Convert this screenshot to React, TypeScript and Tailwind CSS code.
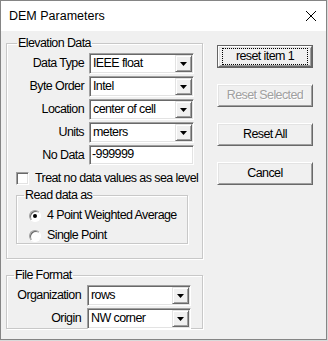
import React from "react";

const narrow = { fontFamily: '"Liberation Sans", Arial, sans-serif', letterSpacing: "-0.6px" };

function Arrow() {
  return (
    <svg width="7" height="4" viewBox="0 0 7 4">
      <path d="M0 0H7L3.5 4Z" fill="#000" />
    </svg>
  );
}

function Combo({ value }: { value: string }) {
  return (
    <div className="flex h-[21px] w-full border border-t-[#a0a0a0] border-l-[#a0a0a0] border-b-white border-r-white bg-white shadow-[inset_1px_1px_0_#696969,inset_-1px_-1px_0_#e3e3e3]">
      <div className="flex-1 whitespace-nowrap pl-[3px] pt-[1px] text-[12.5px] leading-[17px] text-black">{value}</div>
      <div className="my-[1px] mr-[1px] flex w-[17px] items-center justify-center border border-t-[#e3e3e3] border-l-[#e3e3e3] border-b-[#696969] border-r-[#696969] bg-[#f0f0f0] shadow-[inset_1px_1px_0_#fff,inset_-1px_-1px_0_#a0a0a0]">
        <Arrow />
      </div>
    </div>
  );
}

function Field({ label, children }: { label: string; children: React.ReactNode }) {
  return (
    <div className="flex items-center">
      <div className="w-[79px] whitespace-nowrap pr-[5px] text-right text-[12.5px] leading-[17px]">{label}</div>
      <div className="w-[105px]">{children}</div>
    </div>
  );
}

function Group({ title, className, children }: { title: string; className: string; children: React.ReactNode }) {
  return (
    <fieldset className={"border border-[#c8c8c8] shadow-[1px_1px_0_#fff,inset_1px_1px_0_#fff] " + className}>
      <legend className="ml-[7px] whitespace-nowrap px-[1px] text-[12.5px] leading-[14px]">{title}</legend>
      {children}
    </fieldset>
  );
}

function Button({ label, isDefault, disabled }: { label: string; isDefault?: boolean; disabled?: boolean }) {
  const inner = (
    <div className="flex h-full items-center justify-center border border-t-white border-l-white border-b-[#696969] border-r-[#696969] bg-[#f0f0f0] shadow-[inset_1px_1px_0_#e3e3e3,inset_-1px_-1px_0_#a0a0a0]">
      <span
        className={
          "whitespace-nowrap text-[12.5px] leading-[15px] " +
          (isDefault ? "w-[84px] text-center outline outline-1 outline-dotted outline-black " : "") +
          (disabled ? "text-[#a0a0a0] [text-shadow:1px_1px_0_#fff]" : "text-black")
        }
      >
        {label}
      </span>
    </div>
  );
  return (
    <div className={"h-[23px] w-[96px] " + (isDefault ? "border border-[#646464]" : "")}>{inner}</div>
  );
}

function Radio({ checked, label }: { checked?: boolean; label: string }) {
  return (
    <div className="flex items-center gap-[6px]">
      <div className="flex h-[12px] w-[12px] items-center justify-center rounded-full border border-t-[#a0a0a0] border-l-[#a0a0a0] border-b-white border-r-white bg-white shadow-[inset_1px_1px_0_#696969]">
        {checked && <div className="h-[4px] w-[4px] rounded-full bg-black" />}
      </div>
      <span className="whitespace-nowrap text-[12.5px] leading-[17px]">{label}</span>
    </div>
  );
}

export default function App() {
  return (
    <div className="h-[341px] w-[328px] bg-[#dadada]" style={narrow}>
      <div className="flex h-[340px] w-[327px] flex-col border border-[#858585] bg-[#f0f0f0] text-black">
        {/* title bar */}
        <div className="flex h-[30px] items-center justify-between bg-white pl-[8px] pr-[9px]">
          <span className="text-[12.5px] tracking-normal">DEM Parameters</span>
          <svg width="12" height="12" viewBox="0 0 12 12">
            <path d="M1 1L11 11M11 1L1 11" stroke="#000" strokeWidth="1" />
          </svg>
        </div>

        <div className="flex pl-[5px]">
          <div className="flex w-[197px] flex-col">
            <Group title="Elevation Data" className="mt-[5px] h-[223px] w-[197px] pl-[3px]">
              <div className="mt-[3px] flex flex-col gap-[2px]">
                <Field label="Data Type">
                  <Combo value="IEEE float" />
                </Field>
                <Field label="Byte Order">
                  <Combo value="Intel" />
                </Field>
                <Field label="Location">
                  <Combo value="center of cell" />
                </Field>
                <Field label="Units">
                  <Combo value="meters" />
                </Field>
                <Field label="No Data">
                  <div className="h-[20px] w-full border border-t-[#a0a0a0] border-l-[#a0a0a0] border-b-white border-r-white bg-white pl-[2px] text-[12.5px] leading-[17px] shadow-[inset_1px_1px_0_#696969,inset_-1px_-1px_0_#e3e3e3]">
                    -999999
                  </div>
                </Field>
              </div>
              <div className="ml-[6px] mt-[5px] flex items-center gap-[6px]">
                <div className="h-[13px] w-[13px] border border-t-[#a0a0a0] border-l-[#a0a0a0] border-b-white border-r-white bg-white shadow-[inset_1px_1px_0_#696969,inset_-1px_-1px_0_#e3e3e3]" />
                <span className="whitespace-nowrap text-[12.5px] leading-[17px]">Treat no data values as sea level</span>
              </div>
              <Group title="Read data as" className="ml-[6px] mt-[1px] h-[56px] w-[172px]">
                <div className="ml-[12px] mt-[5px] flex flex-col gap-[3px]">
                  <Radio checked label="4 Point Weighted Average" />
                  <Radio label="Single Point" />
                </div>
              </Group>
            </Group>

            <Group title="File Format" className="mt-[9px] h-[61px] w-[197px]">
              <div className="mt-[3px] flex flex-col gap-[2px]">
                <div className="flex items-center">
                  <div className="w-[80px] whitespace-nowrap pr-[6px] text-right text-[12.5px] leading-[17px]">Organization</div>
                  <div className="w-[104px]">
                    <Combo value="rows" />
                  </div>
                </div>
                <div className="flex items-center">
                  <div className="w-[80px] whitespace-nowrap pr-[6px] text-right text-[12.5px] leading-[17px]">Origin</div>
                  <div className="w-[104px]">
                    <Combo value="NW corner" />
                  </div>
                </div>
              </div>
            </Group>
          </div>

          <div className="ml-[14px] mt-[14px] flex flex-col gap-[16px]">
            <Button label="reset item 1" isDefault />
            <Button label="Reset Selected" disabled />
            <Button label="Reset All" />
            <Button label="Cancel" />
          </div>
        </div>
      </div>
    </div>
  );
}
